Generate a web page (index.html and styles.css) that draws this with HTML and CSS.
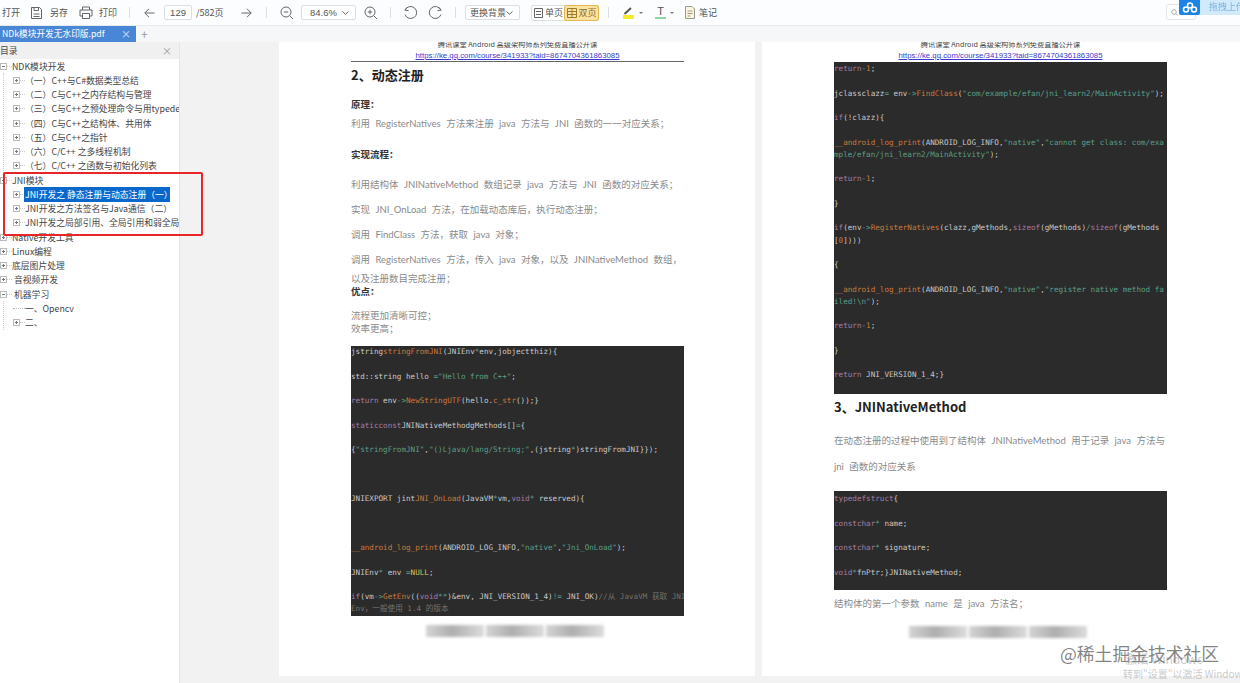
FILE: index.html
```html
<!DOCTYPE html>
<html lang="zh-CN">
<head>
    <meta charset="UTF-8">
    <title>NDk模块开发无水印版.pdf</title>
    <link rel="stylesheet" href="styles.css">
</head>
<body>
    <div class="app">
        <header class="toolbar">
            <span class="tool-text open-text">打开</span>
            <svg class="icon save-icon" width="13" height="14" viewBox="0 0 13 14"><path d="M1.500 1.500h8l2 2v9h-10zM4 1.500v3h4.500v-3M3.500 8h6M3.500 10.500h6"/></svg>
            <span class="tool-text save-text">另存</span>
            <svg class="icon print-icon" width="14" height="13" viewBox="0 0 14 13"><path d="M3.500 4V1h7v3M3 10H1V4h12v6h-2M3.500 7.500h7v5h-7z"/></svg>
            <span class="tool-text print-text">打印</span>
            <i class="sep sep-a"></i>
            <svg class="icon back-icon" width="11" height="10" viewBox="0 0 11 10"><path d="M10.500 5H.8M5 .8.800 5 5 9.200"/></svg>
            <div class="page-input">129</div>
            <span class="tool-text page-count">/582页</span>
            <svg class="icon next-icon" width="11" height="10" viewBox="0 0 11 10"><path d="M.5 5h9.700M6 .8 10.200 5 6 9.200"/></svg>
            <i class="sep sep-b"></i>
            <svg class="icon zoom-out" width="14" height="14" viewBox="0 0 14 14"><circle cx="6" cy="6" r="5"/><path d="M9.700 9.700 13 13M3.800 6h4.400"/></svg>
            <div class="select zoom-select">84.6%<svg class="chevron" width="7" height="4" viewBox="0 0 7 4"><path d="M.5.500 3.500 3.300 6.500.5"/></svg></div>
            <svg class="icon zoom-in" width="14" height="14" viewBox="0 0 14 14"><circle cx="6" cy="6" r="5"/><path d="M9.700 9.700 13 13M3.800 6h4.400M6 3.800v4.400"/></svg>
            <i class="sep sep-c"></i>
            <svg class="icon undo-icon" width="14" height="14" viewBox="0 0 14 14"><path d="M3.200 1.200.9 4.200l3.600.4M1.200 4a6 6 0 1 1-.2 4.500"/></svg>
            <svg class="icon redo-icon" width="14" height="14" viewBox="0 0 14 14"><path d="M10.800 1.200l2.300 3-3.600.4M12.800 4a6 6 0 1 0 .2 4.500"/></svg>
            <i class="sep sep-d"></i>
            <div class="select bg-select">更换背景<svg class="chevron" width="7" height="4" viewBox="0 0 7 4"><path d="M.5.500 3.500 3.300 6.500.5"/></svg></div>
            <div class="segment">
                <div class="segment-item"><svg class="icon" width="9" height="10" viewBox="0 0 9 10"><path d="M.5.500h8v9h-8zM2 3.500h5M2 6.500h5"/></svg>单页</div>
                <div class="segment-item segment-on"><svg class="icon" width="10" height="10" viewBox="0 0 10 10"><path d="M.5.500h9v9h-9zM5 .5v9M.5 3.500h9M.5 6.500h9"/></svg>双页</div>
            </div>
            <i class="sep sep-e"></i>
            <div class="pen-tool">
                <svg class="icon" width="11" height="8" viewBox="0 0 11 8"><path class="dark-stroke" d="M1.500 7 8 1"/></svg>
                <i class="pen-bar"></i>
            </div>
            <i class="caret caret-a"></i>
            <div class="text-tool">T<i class="text-bar"></i></div>
            <i class="caret caret-b"></i>
            <svg class="icon note-icon" width="10" height="13" viewBox="0 0 10 13"><path class="note-fill" d="M.5.500h6.500l2.500 2.500v9.500h-9zM2.500 5h5M2.500 7.500h5M2.500 10h3"/></svg>
            <span class="tool-text note-text">笔记</span>
        </header>

        <nav class="tabbar">
            <div class="tab">
                <span>NDk模块开发无水印版.pdf</span>
                <span class="tab-close">×</span>
            </div>
            <span class="tab-add">+</span>
        </nav>

        <main class="workspace">
            <aside class="sidebar">
                <div class="sidebar-head">
                    <span>目录</span>
                    <span class="sidebar-close">×</span>
                </div>
                <div class="tree">
                    <div class="tree-row"><i class="box open"></i><i class="dash"></i><span>NDK模块开发</span></div>
                    <div class="tree-group">
                        <div class="tree-row"><i class="box"></i><i class="dash"></i><span>（一）C++与C#数据类型总结</span></div>
                        <div class="tree-row"><i class="box"></i><i class="dash"></i><span>（二）C与C++之内存结构与管理</span></div>
                        <div class="tree-row"><i class="box"></i><i class="dash"></i><span>（三）C与C++之预处理命令与用typedef命名</span></div>
                        <div class="tree-row"><i class="box"></i><i class="dash"></i><span>（四）C与C++之结构体、共用体</span></div>
                        <div class="tree-row"><i class="box"></i><i class="dash"></i><span>（五）C与C++之指针</span></div>
                        <div class="tree-row"><i class="box"></i><i class="dash"></i><span>（六）C/C++ 之多线程机制</span></div>
                        <div class="tree-row"><i class="box"></i><i class="dash"></i><span>（七）C/C++ 之函数与初始化列表</span></div>
                    </div>
                    <div class="tree-row"><i class="box open"></i><i class="dash"></i><span>JNI模块</span></div>
                    <div class="tree-group">
                        <div class="tree-row"><i class="box"></i><i class="dash"></i><span class="selected">JNI开发之 静态注册与动态注册（一）</span></div>
                        <div class="tree-row"><i class="box"></i><i class="dash"></i><span>JNI开发之方法签名与Java通信（二）</span></div>
                        <div class="tree-row"><i class="box"></i><i class="dash"></i><span>JNI开发之局部引用、全局引用和弱全局引用（三）</span></div>
                    </div>
                    <div class="tree-row"><i class="box"></i><i class="dash"></i><span>Native开发工具</span></div>
                    <div class="tree-row"><i class="box"></i><i class="dash"></i><span>Linux编程</span></div>
                    <div class="tree-row"><i class="box"></i><i class="dash"></i><span>底层图片处理</span></div>
                    <div class="tree-row"><i class="box"></i><i class="dash"></i><span class="indent">音视频开发</span></div>
                    <div class="tree-row"><i class="box open"></i><i class="dash"></i><span class="indent">机器学习</span></div>
                    <div class="tree-group">
                        <div class="tree-row"><i class="leaf"></i><span>一、Opencv</span></div>
                        <div class="tree-row"><i class="box"></i><i class="dash"></i><span>二、</span></div>
                    </div>
                </div>
            </aside>

            <section class="viewer">
                <article class="page">
                    <div class="page-head">
                        <div class="head-title">腾讯课堂 Android 高级架构师系列免费直播公开课</div>
                        <a class="head-link">https://ke.qq.com/course/341933?taid=8674704361863085</a>
                    </div>
                    <h2 class="doc-title first-title">2、动态注册</h2>
                    <p class="doc-bold bold-a">原理：</p>
                    <p class="doc-text text-a">利用 RegisterNatives 方法来注册 java 方法与 JNI 函数的一一对应关系；</p>
                    <p class="doc-bold bold-b">实现流程：</p>
                    <p class="doc-text text-b">利用结构体 JNINativeMethod 数组记录 java 方法与 JNI 函数的对应关系；</p>
                    <p class="doc-text text-c">实现 JNI_OnLoad 方法，在加载动态库后，执行动态注册；</p>
                    <p class="doc-text text-c">调用 FindClass 方法，获取 java 对象；</p>
                    <p class="doc-text text-c">调用 RegisterNatives 方法，传入 java 对象，以及 JNINativeMethod 数组，</p>
                    <p class="doc-text text-d">以及注册数目完成注册；</p>
                    <p class="doc-bold bold-c">优点：</p>
                    <p class="doc-text text-e">流程更加清晰可控；</p>
                    <p class="doc-text text-f">效率更高；</p>
                    <pre class="code code-a"><span class="w">jstring</span><span class="o">stringFromJNI</span>(JNIEnv<span class="g">*</span>env,jobject<span class="w">thiz</span>){

std::string hello <span class="g">="Hello from C++"</span>;

<span class="p">return</span> env<span class="g">-&gt;</span><span class="o">NewStringUTF</span>(hello.<span class="o">c_str</span>());}

<span class="p">staticconst</span>JNINativeMethodgMethods[]<span class="g">=</span>{

{<span class="g">"stringFromJNI"</span>,<span class="g">"()Ljava/lang/String;"</span>,(jstring<span class="g">*</span>)stringFromJNI}});



JNIEXPORT jint<span class="o">JNI_OnLoad</span>(JavaVM<span class="g">*</span>vm,<span class="p">void</span><span class="g">*</span> reserved){



<span class="o">__android_log_print</span>(ANDROID_LOG_INFO,<span class="g">"native"</span>,<span class="g">"Jni_OnLoad"</span>);

JNIEnv<span class="g">*</span> env <span class="g">=</span><span class="y">NULL</span>;

<span class="p">if</span>(vm<span class="g">-&gt;</span><span class="o">GetEnv</span>((<span class="p">void</span><span class="g">**</span>)&amp;env, JNI_VERSION_1_4)<span class="g">!=</span> JNI_OK)<span class="c">//从 JavaVM 获取 JNI</span>
<span class="c">Env，一般使用 1.4 的版本</span></pre>
                    <div class="blur-foot"><i></i><i></i><i></i></div>
                </article>

                <article class="page page-right">
                    <div class="page-head">
                        <div class="head-title">腾讯课堂 Android 高级架构师系列免费直播公开课</div>
                        <a class="head-link">https://ke.qq.com/course/341933?taid=8674704361863085</a>
                    </div>
                    <pre class="code code-b"><span class="p">return</span><span class="g">-</span><span class="o">1</span>;

<span class="w">jclassclazz</span><span class="g">=</span> env<span class="g">-&gt;</span><span class="o">FindClass</span>(<span class="g">"com/example/efan/jni_learn2/MainActivity"</span>);

<span class="p">if</span>(!clazz){

<span class="o">__android_log_print</span>(ANDROID_LOG_INFO,<span class="g">"native"</span>,<span class="g">"cannot get class: com/exa</span>
<span class="g">mple/efan/jni_learn2/MainActivity"</span>);

<span class="p">return</span><span class="g">-</span><span class="o">1</span>;

}

<span class="p">if</span>(env<span class="g">-&gt;</span><span class="o">RegisterNatives</span>(clazz,gMethods,<span class="p">sizeof</span>(gMethods)<span class="g">/</span><span class="p">sizeof</span>(gMethods
[<span class="o">0</span>])))

{

<span class="o">__android_log_print</span>(ANDROID_LOG_INFO,<span class="g">"native"</span>,<span class="g">"register native method fa</span>
<span class="g">iled!\n"</span>);

<span class="p">return</span><span class="g">-</span><span class="o">1</span>;

}

<span class="p">return</span> JNI_VERSION_1_4;}</pre>
                    <h2 class="doc-title second-title">3、JNINativeMethod</h2>
                    <p class="doc-text text-g">在动态注册的过程中使用到了结构体 JNINativeMethod 用于记录 java 方法与</p>
                    <p class="doc-text text-h">jni 函数的对应关系</p>
                    <pre class="code code-c"><span class="p">typedefstruct</span>{

<span class="p">constchar</span><span class="g">*</span> name;

<span class="p">constchar</span><span class="g">*</span> signature;

<span class="p">void</span><span class="g">*</span>fnPtr;}JNINativeMethod;</pre>
                    <p class="doc-text text-i">结构体的第一个参数 name 是 java 方法名；</p>
                    <div class="blur-foot foot-b"><i></i><i></i><i></i></div>
                </article>
            </section>

            <div class="red-mark"></div>
        </main>

        <div class="search-box"><svg class="search-glass" width="7" height="7" viewBox="0 0 7 7"><circle cx="3" cy="3" r="2.300"/><path d="M4.800 4.800 6.500 6.500"/></svg></div>
        <div class="cloud-badge">
            <div class="cloud-logo"><svg width="16" height="11" viewBox="0 0 16 11"><circle cx="4" cy="7.500" r="2.500"/><circle cx="12" cy="7.500" r="2.500"/><circle cx="8" cy="3.500" r="2.500"/></svg></div>
            <span>拖拽上传</span>
        </div>
        <div class="stamp">@稀土掘金技术社区</div>
        <div class="activate activate-a">激活 Windows</div>
        <div class="activate activate-b">转到"设置"以激活 Windows</div>
    </div>
</body>
</html>
```

FILE: styles.css
```css
* {
    box-sizing: border-box;
}

html, body {
    margin: 0;
    height: 100%;
    overflow: hidden;
}

body {
    font-family: "Noto Sans CJK SC", "Liberation Sans", sans-serif;
    color: #444;
    background: #f2f2f2;
}

.app {
    position: relative;
    display: flex;
    flex-direction: column;
    height: 683px;
    overflow: hidden;
    filter: blur(0.45px);
}

/* toolbar */
.toolbar {
    display: flex;
    align-items: center;
    flex: 0 0 26px;
    min-height: 0;
    padding-left: 2px;
    overflow: hidden;
    font-size: 9px;
    line-height: 12px;
    white-space: nowrap;
    background: #fbfdfe;
    border-bottom: 1px solid #e8eaeb;
}

.tool-text {
    flex: none;
    color: #555;
}

.icon {
    flex: none;
    fill: none;
    stroke: #666;
    stroke-width: 1;
}

.save-icon { margin-left: 10px; }
.save-text { margin-left: 7px; }
.print-icon { margin-left: 11px; }
.print-text { margin-left: 6px; }
.back-icon { margin-left: 14px; }
.next-icon { margin-left: 18px; }
.zoom-out { margin-left: 13px; }
.zoom-in { margin-left: 8px; }
.undo-icon { margin-left: 13px; }
.redo-icon { margin-left: 10px; }
.note-icon { margin-left: 11px; }
.note-text { margin-left: 4px; }

.page-count {
    width: 27px;
    margin-left: 4px;
    font-size: 9px;
}

.sep {
    flex: none;
    width: 1px;
    height: 11px;
    background: #dcdfe0;
}

.sep-a { margin-left: 12px; }
.sep-b { margin-left: 14px; }
.sep-c { margin-left: 12px; }
.sep-d { margin-left: 13px; }
.sep-e { margin-left: 9px; }

.page-input {
    flex: none;
    width: 28px;
    height: 15px;
    margin-left: 9px;
    font: 9.500px/13px "Liberation Sans", sans-serif;
    text-align: center;
    color: #555;
    background: #fff;
    border: 1px solid #dcdfe0;
    border-radius: 2px;
}

.select {
    display: flex;
    flex: none;
    align-items: center;
    justify-content: space-between;
    height: 15px;
    padding: 0 6px 0 4px;
    color: #555;
    background: #fff;
    border: 1px solid #dcdfe0;
    border-radius: 2px;
}

.zoom-select {
    width: 55px;
    margin-left: 7px;
    padding-left: 8px;
    font: 9.500px "Liberation Sans", sans-serif;
}

.bg-select {
    width: 55px;
    margin-left: 9px;
}

.chevron {
    fill: none;
    stroke: #666;
}

.segment {
    display: flex;
    flex: none;
    width: 68px;
    height: 16px;
    margin-left: 11px;
    background: #fff;
    border: 1px solid #dcdfe0;
    border-radius: 2px;
}

.segment-item {
    display: flex;
    flex: 1;
    align-items: center;
    justify-content: center;
    gap: 2px;
    color: #555;
}

.segment-on {
    color: #8a6a20;
    background: #fbe3a4;
    box-shadow: 0 0 0 1px #eab64f;
    border-radius: 2px;
}

.segment-on .icon {
    stroke: #9b7a2c;
}

.pen-tool {
    display: flex;
    flex: none;
    flex-direction: column;
    align-items: center;
    width: 11px;
    margin-left: 14px;
}

.dark-stroke {
    stroke: #555;
    stroke-width: 2;
}

.pen-bar {
    width: 11px;
    height: 4px;
    background: #f8ea2c;
}

.caret {
    flex: none;
    width: 0;
    height: 0;
    border: 2px solid transparent;
    border-top: 2px solid #777;
    border-bottom: 0;
}

.caret-a { margin-left: 5px; }
.caret-b { margin-left: 4px; }

.text-tool {
    display: flex;
    flex: none;
    flex-direction: column;
    align-items: center;
    width: 11px;
    margin-left: 12px;
    font: 11px/11px "Liberation Sans", sans-serif;
    color: #555;
}

.text-bar {
    width: 11px;
    height: 2px;
    background: #8fd6a5;
}

.note-fill {
    fill: #fdf6dc;
    stroke: #9a9a8c;
}

/* tabs */
.tabbar {
    display: flex;
    align-items: center;
    flex: 0 0 16px;
    min-height: 0;
    overflow: hidden;
    font-size: 8.700px;
    line-height: 12px;
    background: #f5f7f8;
}

.tab {
    display: flex;
    align-items: center;
    justify-content: space-between;
    width: 136px;
    height: 100%;
    padding: 0 5px 0 2px;
    color: #fff;
    background: #4a86d6;
}

.tab-close {
    font-size: 10px;
    color: #dce8f8;
}

.tab-add {
    margin-left: 5px;
    font-size: 12px;
    color: #999;
}

/* sidebar */
.workspace {
    position: relative;
    display: flex;
    flex: 1;
    min-height: 0;
}

.sidebar {
    flex: 0 0 180px;
    overflow: hidden;
    font-size: 8.800px;
    background: #fff;
    border-right: 1px solid #e6e6e6;
}

.sidebar-head {
    display: flex;
    align-items: center;
    justify-content: space-between;
    height: 17px;
    padding: 0 7px 0 0;
    color: #444;
    background: #f0f0f0;
}

.sidebar-close {
    font-size: 10px;
    color: #999;
}

.tree {
    white-space: nowrap;
}

.tree-row {
    display: flex;
    align-items: center;
    height: 14.250px;
    color: #444;
}

.tree-group {
    margin-left: 3px;
    padding-left: 9px;
    border-left: 1px dotted #ccc;
}

.box {
    position: relative;
    flex: none;
    width: 7px;
    height: 7px;
    background: #fff;
    border: 1px solid #bbb;
}

.box::before,
.box::after {
    content: "";
    position: absolute;
    background: #777;
}

.box::before {
    left: 1px;
    top: 2px;
    width: 3px;
    height: 1px;
}

.box::after {
    left: 2px;
    top: 1px;
    width: 1px;
    height: 3px;
}

.box.open::after {
    display: none;
}

.dash {
    flex: none;
    width: 5px;
    border-top: 1px dotted #ccc;
}

.leaf {
    flex: none;
    width: 12px;
    border-top: 1px dotted #bbb;
}

.indent {
    margin-left: 2px;
}

.selected {
    display: block;
    width: 146px;
    height: 15px;
    line-height: 15px;
    margin-left: -1px;
    padding-left: 1px;
    color: #fff;
    background: #0a68cc;
    overflow: hidden;
}

.red-mark {
    position: absolute;
    left: 3px;
    top: 130px;
    width: 200px;
    height: 64px;
    border: 2px solid #e8262a;
    border-radius: 2px;
}

/* pdf pages */
.viewer {
    display: flex;
    flex: 1;
    gap: 7px;
    min-width: 0;
    padding-left: 99px;
    background: #f2f2f2;
}

.page {
    flex: 0 0 476px;
    height: 634px;
    padding: 0 71px 0 72px;
    overflow: hidden;
    background: #fff;
}

.page-right {
    flex-basis: 478px;
    padding-right: 73px;
}

.page-head {
    height: 20px;
    text-align: center;
    color: #444;
    border-bottom: 1px solid #666;
}

.page-right .page-head {
    border-bottom: 0;
}

.head-title {
    height: 8px;
    overflow: hidden;
    font-size: 7.200px;
    line-height: 4px;
}

.head-link {
    display: block;
    font: 7.800px/11px "Liberation Sans", sans-serif;
    color: #3a3ad0;
    text-decoration: underline;
}

.doc-title {
    margin: 0;
    font-size: 13px;
    font-weight: 700;
    line-height: 18px;
    color: #222;
}

.first-title { margin-top: 4px; }
.second-title { margin-top: 4px; }

.doc-bold {
    margin: 0;
    font-size: 9.500px;
    font-weight: 700;
    line-height: 13px;
    color: #333;
}

.doc-text {
    margin: 0;
    font-family: Lato, "Noto Sans CJK SC", sans-serif;
    font-size: 9.500px;
    line-height: 13px;
    word-spacing: 3px;
    color: #8a8a8a;
    white-space: nowrap;
}

.bold-a { margin-top: 14px; }
.text-a { margin-top: 6px; }
.bold-b { margin-top: 18px; }
.text-b { margin-top: 17px; }
.text-c { margin-top: 12px; }
.text-d { margin-top: 6px; }
.bold-c { margin-top: 0; }
.text-e { margin-top: 11px; }
.text-f { margin-top: 0; }
.text-g { margin-top: 18px; }
.text-h { margin-top: 13px; }
.text-i { margin-top: 7px; }

.code {
    margin: 0;
    overflow: hidden;
    font: 7.620px/12.250px "DejaVu Sans Mono", "Noto Sans CJK SC", monospace;
    color: #c8c8c8;
    background: #2b2b2b;
}

.code-a { height: 270px; margin-top: 11px; }
.code-b { height: 332px; padding-top: 1px; }
.code-c { height: 99px; margin-top: 18px; padding-top: 2px; }

.w { color: #c9c9c9; }
.o { color: #c9793c; }
.g { color: #5a9f88; }
.p { color: #a77ba0; }
.y { color: #d9c45a; }
.c { color: #77706a; }

.blur-foot {
    display: flex;
    gap: 2px;
    width: 178px;
    height: 12px;
    margin: 9px 0 0 75px;
    filter: blur(1.500px);
}

.blur-foot i {
    flex: 1;
    background: linear-gradient(90deg, #d4d4d4, #aeaeae 45%, #dcdcdc);
}

.foot-b {
    margin-top: 16px;
}

/* things laid over the window */
.search-box {
    position: absolute;
    left: 1166px;
    top: 4px;
    width: 30px;
    height: 16px;
    padding: 4px 0 0 4px;
    background: #fff;
    border: 1px solid #e2e4e5;
    border-radius: 3px;
}

.search-glass {
    display: block;
    fill: none;
    stroke: #aaa;
}

.cloud-badge {
    position: absolute;
    left: 1179px;
    top: 0;
    display: flex;
    width: 61px;
    height: 15px;
    font-size: 9px;
    color: #7fb2df;
    background: #d0eafc;
}

.cloud-logo {
    display: flex;
    flex: 0 0 21px;
    align-items: center;
    justify-content: center;
    margin-right: 9px;
    background: #1c84e4;
    border-radius: 0 0 2px 2px;
}

.cloud-logo svg {
    fill: none;
    stroke: #fff;
    stroke-width: 1.500;
}

.cloud-badge span {
    line-height: 14px;
    white-space: nowrap;
}

.stamp {
    position: absolute;
    left: 1060px;
    top: 640px;
    font-size: 17.800px;
    line-height: 26px;
    color: rgba(110, 110, 110, 0.85);
    white-space: nowrap;
}

.activate {
    position: absolute;
    color: rgba(150, 150, 150, 0.5);
    white-space: nowrap;
}

.activate-a {
    left: 1125px;
    top: 650px;
    font-size: 12px;
}

.activate-b {
    left: 1123px;
    top: 666px;
    font-size: 10px;
}
```
